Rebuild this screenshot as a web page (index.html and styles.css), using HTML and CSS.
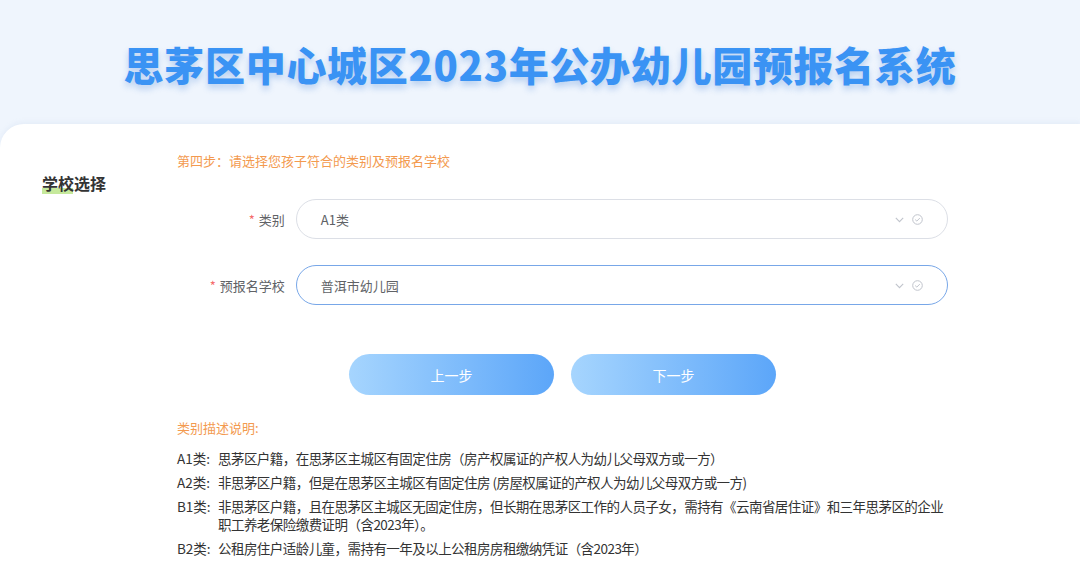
FILE: index.html
```html
<!DOCTYPE html>
<html lang="zh-CN">
<head>
<meta charset="utf-8">
<title>思茅区中心城区2023年公办幼儿园预报名系统</title>
<link rel="stylesheet" href="styles.css">
</head>
<body>
<header class="header">
  <h1 class="title">思茅区中心城区2023年公办幼儿园预报名系统</h1>
</header>
<section class="card">
  <aside class="side">
    <h2 class="side-title"><span class="mark">学校选择</span></h2>
  </aside>
  <main class="main">
    <p class="step">第四步：请选择您孩子符合的类别及预报名学校</p>
    <div class="form">
      <div class="row">
        <label class="label"><span class="req">*</span>类别</label>
        <div class="select">
          <span class="value">A1类</span>
          <span class="icons">
            <svg class="chev" width="9" height="6" viewBox="0 0 9 6"><path d="M0.8 0.8 L4.5 4.6 L8.2 0.8" fill="none" stroke="#c0c4cc" stroke-width="1.1"/></svg>
            <svg class="check" width="11" height="11" viewBox="0 0 11 11"><circle cx="5.5" cy="5.5" r="4.8" fill="none" stroke="#c0c4cc" stroke-width="1"/><path d="M3.2 5.6 L4.8 7.1 L7.8 4.1" fill="none" stroke="#c0c4cc" stroke-width="1"/></svg>
          </span>
        </div>
      </div>
      <div class="row">
        <label class="label"><span class="req">*</span>预报名学校</label>
        <div class="select focus">
          <span class="value">普洱市幼儿园</span>
          <span class="icons">
            <svg class="chev" width="9" height="6" viewBox="0 0 9 6"><path d="M0.8 0.8 L4.5 4.6 L8.2 0.8" fill="none" stroke="#c0c4cc" stroke-width="1.1"/></svg>
            <svg class="check" width="11" height="11" viewBox="0 0 11 11"><circle cx="5.5" cy="5.5" r="4.8" fill="none" stroke="#c0c4cc" stroke-width="1"/><path d="M3.2 5.6 L4.8 7.1 L7.8 4.1" fill="none" stroke="#c0c4cc" stroke-width="1"/></svg>
          </span>
        </div>
      </div>
    </div>
    <div class="buttons">
      <button class="btn">上一步</button>
      <button class="btn">下一步</button>
    </div>
    <p class="desc-title">类别描述说明:</p>
    <ul class="desc">
      <li class="item"><span class="tag">A1类:</span><span class="text">思茅区户籍，在思茅区主城区有固定住房（房产权属证的产权人为幼儿父母双方或一方）</span></li>
      <li class="item"><span class="tag">A2类:</span><span class="text">非思茅区户籍，但是在思茅区主城区有固定住房 (房屋权属证的产权人为幼儿父母双方或一方)</span></li>
      <li class="item"><span class="tag">B1类:</span><span class="text">非思茅区户籍，且在思茅区主城区无固定住房，但长期在思茅区工作的人员子女，需持有《云南省居住证》和三年思茅区的企业职工养老保险缴费证明（含2023年）。</span></li>
      <li class="item"><span class="tag">B2类:</span><span class="text">公租房住户适龄儿童，需持有一年及以上公租房房租缴纳凭证（含2023年）</span></li>
    </ul>
  </main>
</section>
</body>
</html>
```
FILE: styles.css
```css
* { box-sizing: border-box; }
html, body { margin: 0; padding: 0; }
body {
  background: #eff5fd;
  font-family: "Noto Sans CJK SC", "Noto Sans", sans-serif;
  color: #333;
  height: 564px;
  overflow: hidden;
}
.header {
  height: 124px;
  display: flex;
  align-items: center;
  justify-content: center;
  padding-top: 4px;
}
.title {
  margin: 0;
  font-size: 40px;
  font-weight: 900;
  line-height: 48px;
  letter-spacing: 0.7px;
  color: #3a93f4;
  text-shadow: 0 4px 6px rgba(40, 110, 210, 0.28);
}
.card {
  background: #fff;
  border-radius: 24px 0 0 0;
  min-height: 440px;
  display: flex;
  padding: 28px 0 0 42px;
  box-shadow: 0 -2px 4px rgba(200, 215, 235, 0.25);
}
.side { width: 135px; flex: none; }
.side-title {
  margin: 20px 0 0;
  font-size: 16px;
  font-weight: 700;
  line-height: 22px;
  color: #333;
}
.mark {
  background: linear-gradient(#c6e99c, #c6e99c) no-repeat 0 17px / 31px 6px;
}
.main { width: 771px; flex: none; }
.step {
  margin: 0;
  font-size: 13px;
  line-height: 18px;
  color: #f39a4f;
}
.form {
  margin-top: 29px;
  display: flex;
  flex-direction: column;
  gap: 26px;
}
.row { display: flex; align-items: center; }
.label {
  width: 119px;
  padding-right: 11px;
  text-align: right;
  font-size: 13px;
  color: #606266;
}
.req { color: #f56c6c; margin-right: 4px; }
.select {
  width: 653px;
  height: 40px;
  border: 1px solid #dcdfe6;
  border-radius: 20px;
  display: flex;
  align-items: center;
  justify-content: space-between;
  padding: 0 24px 0 24px;
  font-size: 13px;
  color: #606266;
}
.select.focus { border-color: #78a7e8; }
.icons { display: flex; align-items: center; gap: 8px; }
.chev { display: block; margin-top: 1px; }
.check { display: block; }
.buttons {
  margin-top: 49px;
  display: flex;
  justify-content: center;
  gap: 17px;
}
.btn {
  width: 205px;
  height: 41px;
  border: none;
  border-radius: 21px;
  background: linear-gradient(90deg, #a6d5fe 0%, #5ca6f9 100%);
  color: #fff;
  font-family: inherit;
  font-size: 14px;
  padding: 0;
}
.desc-title {
  margin: 24px 0 0;
  font-size: 13px;
  line-height: 18px;
  color: #f39a4f;
}
.desc {
  list-style: none;
  margin: 12px 0 0;
  padding: 0;
  display: flex;
  flex-direction: column;
  gap: 6px;
}
.item {
  display: flex;
  font-size: 13.5px;
  letter-spacing: -0.55px;
  line-height: 18px;
  color: #333;
}
.tag { width: 41px; flex: none; letter-spacing: 0; }
.text { width: 730px; }
```
